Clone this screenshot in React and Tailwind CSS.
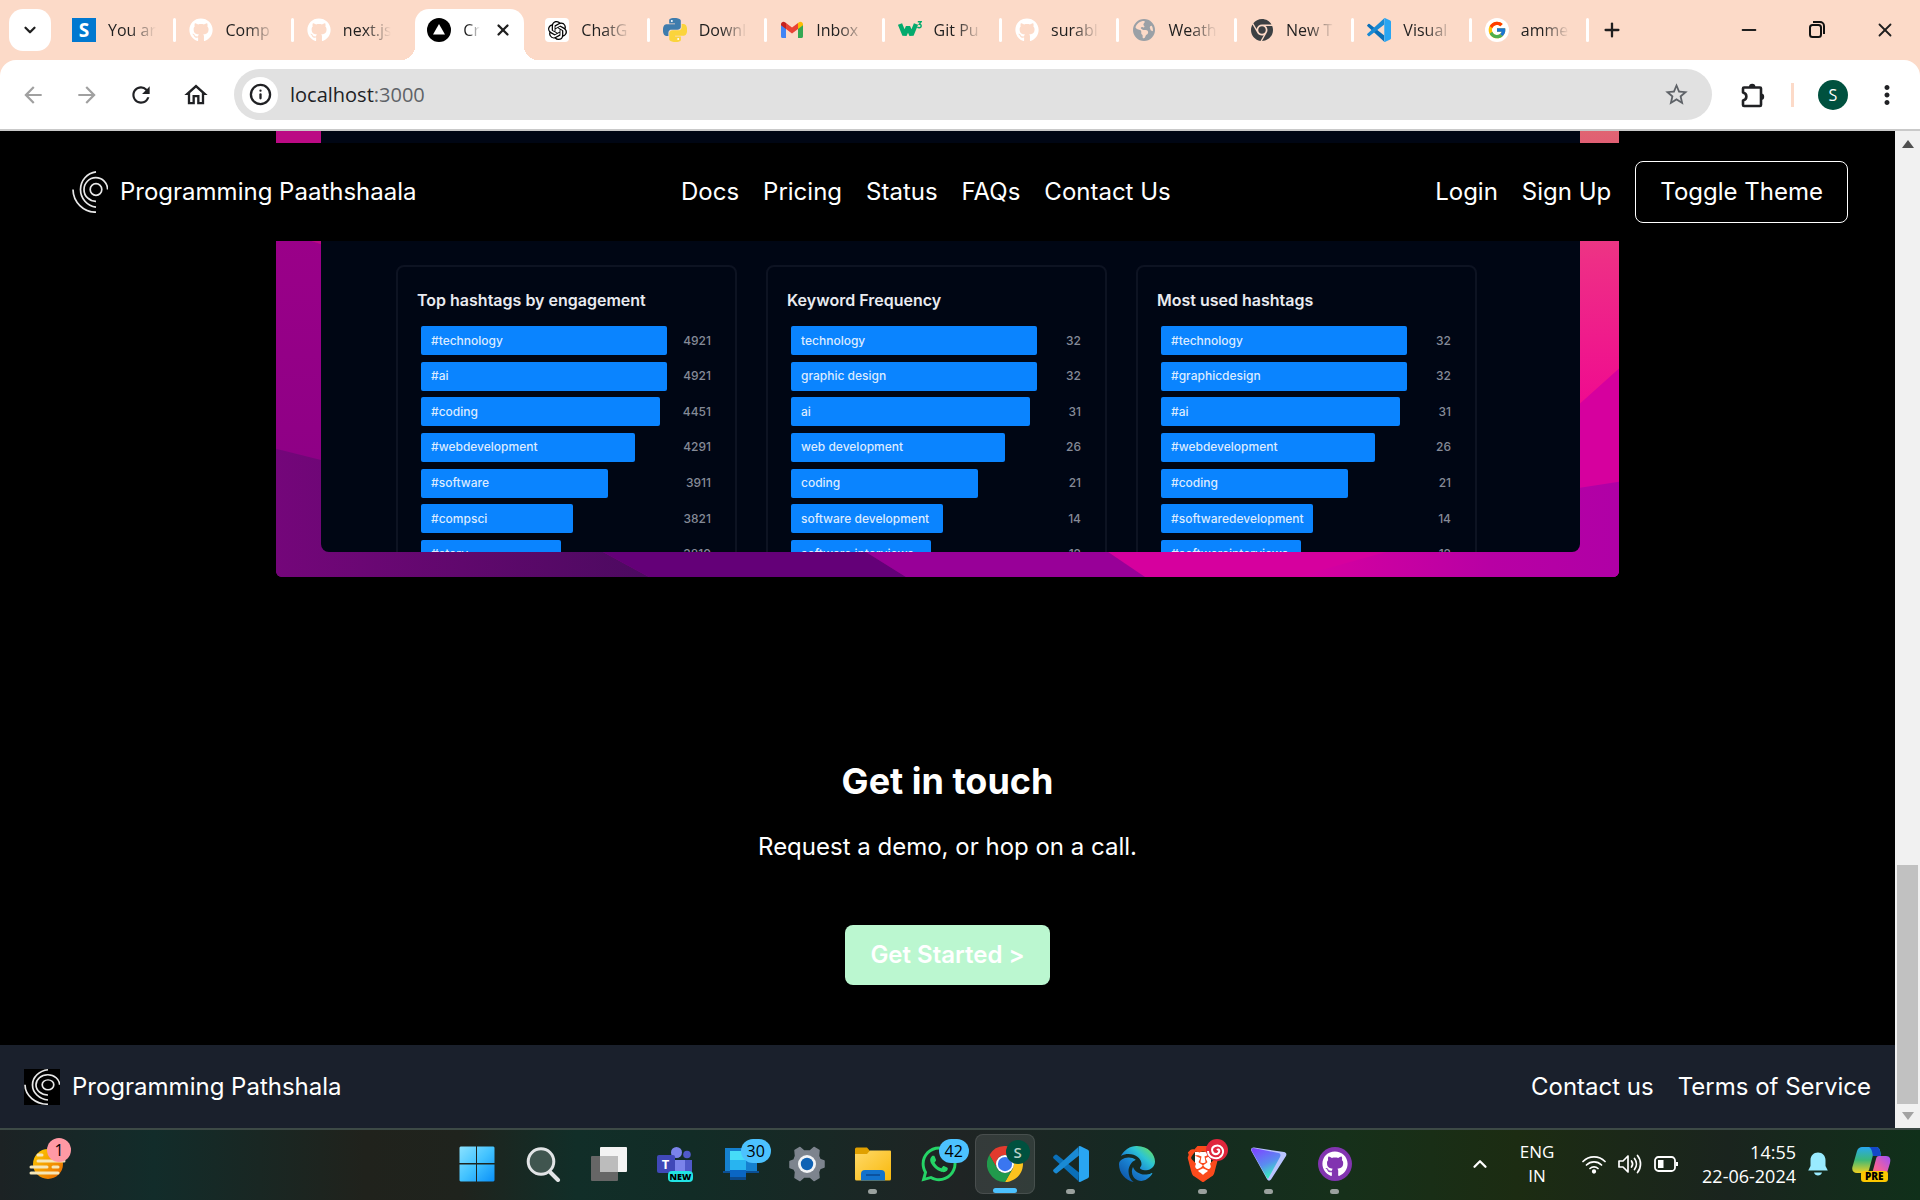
import React from "react";
import { FaGithub, FaChrome, FaEarthAmericas, FaEdge, FaWhatsapp } from "react-icons/fa6";
import { SiBrave, SiOpenai } from "react-icons/si";
import { FcGoogle } from "react-icons/fc";
import {
  MdArrowBack,
  MdArrowForward,
  MdRefresh,
  MdOutlineHome,
  MdStarBorder,
  MdMoreVert,
} from "react-icons/md";
import { ChevronDown, ChevronUp, X, Plus, Minus, Info } from "lucide-react";

/* ---------- brand drawings ---------- */

function Logo({ className }) {
  return (
    <svg viewBox="0 0 36 42" preserveAspectRatio="none" className={className} fill="none" stroke="#e8e8e8" strokeWidth="1.7" aria-hidden="true">
      <circle cx="24" cy="18.5" r="5.8" />
      <path d="M35.6 18.5A11.8 11.8 0 1 0 24 30.3" />
      <path d="M24 0.9A17.8 17.8 0 0 0 24 36.2" />
      <path d="M1 18.5A23 23 0 0 0 24 41.2" />
    </svg>
  );
}

function PythonIcon() {
  return (
    <svg viewBox="0 0 24 24" className="size-6" aria-hidden="true">
      <path
        fill="#3f7cad"
        d="M14.25.18l.9.2.73.26.59.3.45.32.34.34.25.34.16.33.1.3.04.26.02.2-.01.13V8.5l-.05.63-.13.55-.21.46-.26.38-.3.31-.33.25-.35.19-.35.14-.33.1-.3.07-.26.04-.21.02H8.77l-.69.05-.59.14-.5.22-.41.27-.33.32-.27.35-.2.36-.15.37-.1.35-.07.32-.04.27-.02.21v3.06H3.17l-.21-.03-.28-.07-.32-.12-.35-.18-.36-.26-.36-.36-.35-.46-.32-.59-.28-.73-.21-.88-.14-1.05-.05-1.23.06-1.22.16-1.04.24-.87.32-.71.36-.57.4-.44.42-.33.42-.24.4-.16.36-.1.32-.05.24-.01h.16l.06.01h8.16v-.83H6.18l-.01-2.75-.02-.37.05-.34.11-.31.17-.28.25-.26.31-.23.38-.2.44-.18.51-.15.58-.12.64-.1.71-.06.77-.04.84-.02 1.27.05z"
      />
      <path
        fill="#fbd43c"
        d="M21.1 6.11l.28.06.32.12.35.18.36.27.36.35.35.47.32.59.28.73.21.88.14 1.04.05 1.23-.06 1.23-.16 1.04-.24.86-.32.71-.36.57-.4.45-.42.33-.42.24-.4.16-.36.09-.32.05-.24.02-.16-.01h-8.22v.82h5.84l.01 2.76.02.36-.05.34-.11.31-.17.29-.25.25-.31.24-.38.2-.44.17-.51.15-.58.13-.64.09-.71.07-.77.04-.84.01-1.27-.04-1.07-.14-.9-.2-.73-.25-.59-.3-.45-.33-.34-.34-.25-.34-.16-.33-.1-.3-.04-.25-.02-.2.01-.13v-5.34l.05-.64.13-.54.21-.46.26-.38.3-.32.33-.24.35-.2.35-.14.33-.1.3-.06.26-.04.21-.02.13-.01h5.84l.69-.05.59-.14.5-.21.41-.28.33-.32.27-.35.2-.36.15-.36.1-.35.07-.32.04-.28.02-.21V6.07h2.09l.14.01z"
      />
      <circle cx="8.8" cy="2.9" r="1" fill="#fff" />
      <circle cx="15.2" cy="21" r="1" fill="#fff" />
    </svg>
  );
}

function GmailIcon() {
  return (
    <svg viewBox="0 0 24 24" className="size-6" aria-hidden="true">
      <path fill="#4285f4" d="M1 6v12.500a1.600 1.600 0 0 0 1.600 1.500H6V10z" />
      <path fill="#34a853" d="M18 20h3.400a1.600 1.600 0 0 0 1.600-1.500V6l-5 4z" />
      <path fill="#ea4335" d="M6 11V5l6 4.500L18 5v6l-6 4.500z" />
      <path fill="#c5221f" d="M1 6.200C1 4 3.500 3 5 4.200L6 5v6L1 7.300z" />
      <path fill="#fbbc04" d="M23 6.200C23 4 20.500 3 19 4.200L18 5v6l5-3.700z" />
    </svg>
  );
}

function W3Icon() {
  return (
    <svg viewBox="0 0 24 24" className="size-6" aria-hidden="true">
      <path d="M2 6l4.500 11L10 9l3.500 8L18 6" fill="none" stroke="#04aa6d" strokeWidth="4.500" strokeLinejoin="bevel" />
      <path d="M19.800 3.700h3.400l-1.800 2.500c2.400 0 2.400 3.600-.2 3.600-.8 0-1.400-.3-1.700-.9" fill="none" stroke="#04aa6d" strokeWidth="1.400" />
    </svg>
  );
}

function VsCodeIcon({ className }) {
  return (
    <svg viewBox="0 0 24 24" className={className} aria-hidden="true">
      <path fill="#0a6fb8" d="M17.300 17.600L2.600 5.900a1 1 0 0 0-1.300.1L.4 6.900a1 1 0 0 0 0 1.400L17 23.500z" />
      <path fill="#1a8ad4" d="M17.300 6.400L2.600 18.100a1 1 0 0 1-1.300-.1L.4 17.100a1 1 0 0 1 0-1.400L17 .5z" />
      <path fill="#29a5f2" d="M17 .3a1.400 1.400 0 0 1 1.400-.1l4.800 2.300a1.400 1.400 0 0 1 .8 1.300v16.400a1.400 1.400 0 0 1-.8 1.300l-4.800 2.300a1.400 1.400 0 0 1-1.400-.1c.3-.2.300-.5.300-.9V1.200c0-.4 0-.7-.3-.9z" />
    </svg>
  );
}

function ChromeIcon({ className }) {
  return (
    <svg viewBox="0 0 48 48" className={className} aria-hidden="true">
      <path fill="#e33b2e" d="M24 12H44.780A24 24 0 0 0 3.200 12L13.600 30A12 12 0 0 1 24 12z" />
      <path fill="#fcc31e" d="M34.390 30L24 48A24 24 0 0 0 44.780 12H24A12 12 0 0 1 34.390 30z" />
      <path fill="#219a4c" d="M13.600 30L3.200 12A24 24 0 0 0 24 48L34.390 30A12 12 0 0 1 13.600 30z" />
      <circle cx="24" cy="24" r="12" fill="#fff" />
      <circle cx="24" cy="24" r="9.500" fill="#3a76f0" />
    </svg>
  );
}

function PuzzleIcon() {
  return (
    <svg viewBox="0 0 28 28" className="size-7" aria-hidden="true">
      <path
        d="M5 6.500h16a1 1 0 0 1 1 1V24a1 1 0 0 1-1 1H5a1 1 0 0 1-1-1v-4.500c4.500-1 4.500-7 0-8V7.500a1 1 0 0 1 1-1z"
        fill="none"
        stroke="#202124"
        strokeWidth="2.600"
        strokeLinejoin="round"
      />
      <path d="M10 6a3.200 3.200 0 0 1 6.400 0zM22 12.500a3.200 3.200 0 0 1 0 6.400z" fill="#202124" />
    </svg>
  );
}

/* ---------- browser chrome ---------- */

const tabs = [
  { title: "You ar", icon: <span className="flex size-6 items-center justify-center bg-[#0078d0] text-[19px] font-bold leading-none text-white">S</span> },
  { title: "Comp", icon: <FaGithub className="size-6 text-white" /> },
  { title: "next.js", icon: <FaGithub className="size-6 text-white" />, last: true },
  {
    title: "Cr",
    active: true,
    icon: (
      <svg viewBox="0 0 24 24" className="size-6 shrink-0" aria-hidden="true">
        <circle cx="12" cy="12" r="12" />
        <path d="M12 6l6 10.500H6z" fill="#fff" />
      </svg>
    ),
  },
  { title: "ChatG", icon: <span className="flex size-6 items-center justify-center rounded bg-white"><SiOpenai className="size-[19px] text-black" /></span> },
  { title: "Downl", icon: <PythonIcon /> },
  { title: "Inbox", icon: <GmailIcon /> },
  { title: "Git Pu", icon: <W3Icon /> },
  { title: "surabl", icon: <FaGithub className="size-6 text-white" /> },
  { title: "Weath", icon: <FaEarthAmericas className="size-[22px] text-[#9aa0a6]" /> },
  { title: "New T", icon: <FaChrome className="size-[22px] text-[#3c4043]" /> },
  { title: "Visual", icon: <VsCodeIcon className="size-6" /> },
  { title: "amme", icon: <span className="flex size-6 items-center justify-center rounded-full bg-white"><FcGoogle className="size-5" /></span> },
];

function Tab({ title, icon, active, last }) {
  if (active) {
    return (
      <button type="button" className="relative ml-1 mr-2 flex h-[51px] items-center self-end rounded-t-[14px] bg-white pb-[9px] pl-3 pr-3">
        <span className="absolute bottom-0 right-full size-[14px] bg-[radial-gradient(circle_at_0_0,#fcdac8_14px,#ffffff_14px)]" />
        <span className="absolute bottom-0 left-full size-[14px] bg-[radial-gradient(circle_at_100%_0,#fcdac8_14px,#ffffff_14px)]" />
        {icon}
        <span className="ml-3 w-[17px] whitespace-nowrap text-left text-base leading-6 [mask-image:linear-gradient(to_right,#000_30%,transparent)]">{title}</span>
        <X className="ml-auto size-[18px]" strokeWidth={3} />
      </button>
    );
  }
  return (
    <button type="button" className="flex min-w-0 items-center pl-[13px]">
      <span className="flex w-6 shrink-0 justify-center">{icon}</span>
      <span className="ml-3 min-w-0 flex-1 whitespace-nowrap text-left text-base leading-6 [mask-image:linear-gradient(to_right,#000_45%,transparent)]">{title}</span>
      <span className={last ? "ml-[17px] h-6 w-[3px]" : "ml-[17px] h-6 w-[3px] rounded bg-white"} />
    </button>
  );
}

function TabStrip() {
  return (
    <div className="flex h-[60px] items-center text-[#1f1f1f]">
      <button type="button" aria-label="Search tabs" className="ml-[9px] flex size-[42px] shrink-0 items-center justify-center rounded-[14px] bg-white">
        <ChevronDown className="size-[18px]" strokeWidth={3} />
      </button>
      <div className="ml-2 grid h-full w-[79.7%] shrink-0 grid-cols-[repeat(3,minmax(0,1fr))_121px_repeat(9,minmax(0,1fr))] items-center">
        {tabs.map((t) => (
          <Tab key={t.title} {...t} />
        ))}
      </div>
      <button type="button" aria-label="New tab" className="ml-3">
        <Plus className="size-[22px]" strokeWidth={2.500} />
      </button>
      <div className="ml-auto flex items-center gap-[46px] pr-6">
        <button type="button" aria-label="Minimize"><Minus className="size-[22px]" /></button>
        <button type="button" aria-label="Restore">
          <svg viewBox="0 0 22 22" className="size-[22px]" fill="none" stroke="#111" strokeWidth="2" aria-hidden="true">
            <rect x="4" y="6" width="11" height="12" rx="2.500" />
            <path d="M7 3h7a4 4 0 0 1 4 4v8" />
          </svg>
        </button>
        <button type="button" aria-label="Close"><X className="size-[22px]" /></button>
      </div>
    </div>
  );
}

function Toolbar() {
  return (
    <div className="flex h-[71px] items-center rounded-t-2xl border-b-2 border-[#c9c9c9] bg-white pl-5 pr-[18px] text-[#202124]">
      <div className="flex items-center gap-7">
        <button type="button" aria-label="Back" className="text-[#a0a0a0]"><MdArrowBack className="size-[26px]" /></button>
        <button type="button" aria-label="Forward" className="text-[#a0a0a0]"><MdArrowForward className="size-[26px]" /></button>
        <button type="button" aria-label="Reload"><MdRefresh className="size-[26px]" /></button>
        <button type="button" aria-label="Home"><MdOutlineHome className="size-7" /></button>
      </div>
      <div className="ml-6 flex h-[51px] min-w-0 flex-1 items-center rounded-full bg-[#e1e1e1] pl-2 pr-[22px]">
        <span className="flex size-9 shrink-0 items-center justify-center rounded-full bg-white"><Info className="size-[23px]" strokeWidth={2.400} /></span>
        <div className="ml-3 flex-1 text-xl" role="textbox" aria-label="Address">
          localhost<span className="text-[#5f6368]">:3000</span>
        </div>
        <button type="button" aria-label="Bookmark" className="text-[#5f6368]"><MdStarBorder className="size-[27px]" /></button>
      </div>
      <button type="button" aria-label="Extensions" className="ml-[27px]"><PuzzleIcon /></button>
      <span className="ml-6 h-6 w-[3px] bg-[#fcdac8]" />
      <button type="button" aria-label="Profile" className="ml-6 size-[30px] rounded-full bg-[#00513f] text-base text-white">S</button>
      <button type="button" aria-label="Menu" className="ml-6"><MdMoreVert className="size-[30px]" /></button>
    </div>
  );
}

/* ---------- web page ---------- */

function Header() {
  return (
    <header className="absolute inset-x-0 top-3 z-10 flex h-[98px] items-center justify-between bg-black pl-[72px] pr-[47px]">
      <a href="#home" className="flex items-center gap-3">
        <Logo className="h-[42px] w-9" />
        Programming Paathshaala
      </a>
      <nav className="flex gap-6">
        <a href="#docs">Docs</a>
        <a href="#pricing">Pricing</a>
        <a href="#status">Status</a>
        <a href="#faqs">FAQs</a>
        <a href="#contact">Contact Us</a>
      </nav>
      <div className="flex items-center gap-6">
        <a href="#login">Login</a>
        <a href="#signup">Sign Up</a>
        <button type="button" className="h-[62px] rounded-lg border border-white px-6">Toggle Theme</button>
      </div>
    </header>
  );
}

const cards = [
  {
    title: "Top hashtags by engagement",
    rows: [["#technology", 4921, 246], ["#ai", 4921, 246], ["#coding", 4451, 239], ["#webdevelopment", 4291, 214], ["#software", 3911, 187], ["#compsci", 3821, 152], ["#story", 3810, 140]],
  },
  {
    title: "Keyword Frequency",
    rows: [["technology", 32, 246], ["graphic design", 32, 246], ["ai", 31, 239], ["web development", 26, 214], ["coding", 21, 187], ["software development", 14, 152], ["software interviews", 12, 140]],
  },
  {
    title: "Most used hashtags",
    rows: [["#technology", 32, 246], ["#graphicdesign", 32, 246], ["#ai", 31, 239], ["#webdevelopment", 26, 214], ["#coding", 21, 187], ["#softwaredevelopment", 14, 152], ["#softwareinterviews", 12, 140]],
  },
];

function ChartCard({ title, rows }) {
  return (
    <section className="rounded-lg border-2 border-[#0d1322] pl-[19px] pr-6 pt-[21px]">
      <h3 className="text-base font-semibold leading-6 text-[#e9ebf0]">{title}</h3>
      <ul className="ml-1 mt-[14px] flex h-[243px] flex-col justify-between text-xs font-medium">
        {rows.map(([label, value, width]) => (
          <li key={label} className="flex h-[29px] items-center justify-between">
            <span className="flex h-full items-center whitespace-nowrap rounded-xs bg-[#0a84ff] pl-[10px] text-[#dcebff]" style={{ width: (width / 290) * 100 + "%" }}>
              {label}
            </span>
            <span className="text-[#858a97]">{value}</span>
          </li>
        ))}
      </ul>
    </section>
  );
}

function Wallpaper() {
  return (
    <svg viewBox="0 0 1343 445" preserveAspectRatio="none" className="absolute inset-0 -z-10 h-full w-full" aria-hidden="true">
      <defs>
        <linearGradient id="wl" x1="0" y1="0" x2="0" y2="1">
          <stop offset="0" stopColor="#a0008a" />
          <stop offset="1" stopColor="#880084" />
        </linearGradient>
        <linearGradient id="wb" x1="0" y1="0" x2="1" y2="0">
          <stop offset="0" stopColor="#74067a" />
          <stop offset="1" stopColor="#4c0a60" />
        </linearGradient>
        <linearGradient id="wr" x1="0" y1="0" x2="0" y2="1">
          <stop offset="0" stopColor="#e06472" />
          <stop offset="0.45" stopColor="#ee2e86" />
          <stop offset="1" stopColor="#f00890" />
        </linearGradient>
        <linearGradient id="wp" x1="0" y1="0" x2="1" y2="0">
          <stop offset="0" stopColor="#d800a0" />
          <stop offset="0.6" stopColor="#b800a4" />
          <stop offset="1" stopColor="#b000a6" />
        </linearGradient>
      </defs>
      <rect width="1343" height="445" fill="url(#wl)" />
      <path d="M0 0H60V118L30 108L0 90z" fill="#bb0a84" />
      <path d="M0 317L60 332L327 420L373 445H0z" fill="url(#wb)" />
      <path d="M327 420L373 445H630L590 420z" fill="#640078" />
      <path d="M590 420L630 445H870L832 420z" fill="#980098" />
      <path d="M832 420L869 445H1343V200H1000z" fill="#d6009e" />
      <path d="M1020 445L1110 420L1304 356L1343 350V445z" fill="url(#wp)" />
      <path d="M1290 0H1343V237L1304 272L1290 285z" fill="url(#wr)" />
    </svg>
  );
}

function Showcase() {
  return (
    <figure className="relative isolate mx-auto w-full max-w-[1343px] overflow-hidden rounded-b-md pb-[25px] pl-[45px] pr-[39px]">
      <Wallpaper />
      <div className="h-[421px] overflow-hidden rounded-b-lg bg-[#000614] pl-[75px] pr-[103px] pt-[134px]">
        <div className="grid h-[330px] grid-cols-3 gap-[29px]">
          {cards.map((c) => (
            <ChartCard key={c.title} {...c} />
          ))}
        </div>
      </div>
    </figure>
  );
}

function PageFooter() {
  return (
    <footer className="flex h-[83px] items-center justify-between bg-[#1a202c] px-6">
      <a href="#home" className="flex items-center gap-3">
        <Logo className="size-9 bg-black" />
        Programming Pathshala
      </a>
      <div className="flex gap-6">
        <a href="#contact">Contact us</a>
        <a href="#terms">Terms of Service</a>
      </div>
    </footer>
  );
}

function Page() {
  return (
    <div className="relative flex min-w-0 flex-1 flex-col justify-between bg-black font-['Inter',sans-serif] text-2xl leading-9 text-white">
      <Header />
      <main>
        <Showcase />
        <section className="mt-[180px] flex flex-col items-center">
          <h2 className="text-4xl font-bold leading-[48px]">Get in touch</h2>
          <p className="mt-6">Request a demo, or hop on a call.</p>
          <button type="button" className="mt-[60px] h-[60px] rounded-lg bg-[#bbf7d0] px-[25px] font-semibold">Get Started &gt;</button>
        </section>
      </main>
      <PageFooter />
    </div>
  );
}

function Scrollbar() {
  return (
    <div className="flex w-[25px] flex-col items-center bg-[#f1f1f1]" aria-hidden="true">
      <svg viewBox="0 0 12 8" className="mt-[9px] h-2 w-3"><path d="M6 0l6 8H0z" fill="#505050" /></svg>
      <span className="mt-auto h-[239px] w-[21px] bg-[#c1c1c1]" />
      <svg viewBox="0 0 12 8" className="mb-2 mt-2 h-2 w-3"><path d="M0 0h12L6 8z" fill="#a3a3a3" /></svg>
    </div>
  );
}

/* ---------- taskbar ---------- */

function WindowsIcon() {
  return (
    <svg viewBox="0 0 36 36" className="size-9" aria-hidden="true">
      <defs>
        <linearGradient id="win" x1="0" y1="0" x2="1" y2="1">
          <stop offset="0" stopColor="#8be2ff" />
          <stop offset="0.5" stopColor="#43c3ff" />
          <stop offset="1" stopColor="#0a90f8" />
        </linearGradient>
      </defs>
      <path fill="url(#win)" d="M1.500.5H17V17H.5V1.500zM18 .5h16.500l1 1V17H18zM.5 18.500H17v17H1.500l-1-1zM18 18.500h17.500v16l-1 1H18z" />
    </svg>
  );
}

function SearchIcon() {
  return (
    <svg viewBox="0 0 36 36" className="size-9" fill="none" stroke="#e2e4e6" aria-hidden="true">
      <circle cx="16" cy="15.500" r="12.800" strokeWidth="3" fill="#40554f" />
      <path d="M25.500 26.500L33 34" strokeWidth="4" strokeLinecap="round" />
    </svg>
  );
}

function TaskViewIcon() {
  return (
    <svg viewBox="0 0 36 36" className="size-9" aria-hidden="true">
      <rect x="9" y="1" width="27" height="25" rx="1" fill="#f3f3f3" />
      <rect x="0" y="10" width="27" height="25" rx="1" fill="#666" />
      <path d="M9 10h18v16H9z" fill="#bcbcbc" />
    </svg>
  );
}

function TeamsIcon() {
  return (
    <span className="relative block size-9">
      <svg viewBox="0 0 36 36" className="size-9" aria-hidden="true">
        <circle cx="19.500" cy="6.500" r="5.500" fill="#7b83eb" />
        <circle cx="30" cy="8.500" r="3.800" fill="#5059c9" />
        <path d="M26 14h9v12a7 7 0 0 1-9 3z" fill="#5059c9" />
        <path d="M14 14h14v14a7 7 0 0 1-14 2z" fill="#7b83eb" />
        <rect x="0" y="9" width="18" height="18" rx="2" fill="#4048b8" />
      </svg>
      <span className="absolute left-0 top-[9px] w-[18px] text-center text-[13px] font-bold leading-[18px] text-white">T</span>
      <span className="absolute left-[11px] top-[25px] rounded bg-[#22e4e4] px-[2px] text-[9px] font-extrabold leading-[11px] text-black">NEW</span>
    </span>
  );
}

function PhoneLinkIcon() {
  return (
    <svg viewBox="0 0 36 36" className="size-9" aria-hidden="true">
      <path d="M2 2h32v23h2v2H0v-2h2z" fill="#1580cf" />
      <path d="M0 25h36v2H0z" fill="#0b4f94" />
      <path d="M7 5h16v29H7z" fill="#0a66c4" />
      <path d="M7 5h16v19H7z" fill="#28b4f0" />
      <path d="M7 5h16v9H7z" fill="#46dcf8" />
      <path d="M7 31h16v3H7z" fill="#0b4a8c" />
    </svg>
  );
}

function SettingsIcon() {
  return (
    <svg viewBox="0 0 36 36" className="size-9" aria-hidden="true">
      <path
        fill="#7d848e"
        stroke="#7d848e"
        strokeWidth="1.500"
        strokeLinejoin="round"
        d="M11 1.500l4 3.500h6l4-3.500 5 3-.5 5.500 1.500 3.500 4 1.500v6l-4 1.500-1.500 3.500.5 5.500-5 3-4-3.500h-6l-4 3.500-5-3 .5-5.500L5 23l-4-1.500v-6L5 14l1.500-4L6 4.500z"
      />
      <circle cx="18" cy="18" r="9" fill="#f2f4f6" />
      <circle cx="18" cy="18" r="6.200" fill="#0f62b4" />
    </svg>
  );
}

function FolderIcon() {
  return (
    <svg viewBox="0 0 36 36" className="size-9" aria-hidden="true">
      <defs>
        <linearGradient id="fold" x1="0" y1="0" x2="1" y2="1">
          <stop offset="0" stopColor="#ffd968" />
          <stop offset="1" stopColor="#f9b90c" />
        </linearGradient>
      </defs>
      <path d="M0 3a1.500 1.500 0 0 1 1.500-1.500H12L15 5v6H0z" fill="#e0a000" />
      <path d="M0 8h12l3-3.500h20a1 1 0 0 1 1 1V33a1.500 1.500 0 0 1-1.500 1.500h-33A1.500 1.500 0 0 1 0 33z" fill="url(#fold)" />
      <path d="M6 34.500V28a4 4 0 0 1 4-4h16a4 4 0 0 1 4 4v6.500z" fill="#1272cc" />
      <path d="M11 29h14" stroke="#0a4a94" strokeWidth="1.600" />
    </svg>
  );
}

function EdgeIcon() {
  return (
    <span className="relative block size-9">
      <svg viewBox="0 0 36 36" className="absolute inset-0 size-9" aria-hidden="true">
        <defs>
          <linearGradient id="edge" x1="1" y1="0.1" x2="0.2" y2="1">
            <stop offset="0" stopColor="#6be05a" />
            <stop offset="0.3" stopColor="#2cc4d4" />
            <stop offset="0.6" stopColor="#1a84d4" />
            <stop offset="1" stopColor="#0e56a8" />
          </linearGradient>
        </defs>
      </svg>
      <FaEdge className="absolute inset-0 size-9" style={{ fill: "url(#edge)" }} />
    </span>
  );
}

function BraveIcon() {
  return (
    <span className="relative block size-9">
      <svg viewBox="0 0 36 36" className="absolute inset-0 size-9" aria-hidden="true">
        <path d="M10 6h16v22l-8 6-8-6z" fill="#fff" />
      </svg>
      <SiBrave className="absolute inset-0 size-9 text-[#fb4a1c]" />
      <svg viewBox="0 0 24 24" className="absolute -right-2 -top-2 size-6" aria-hidden="true">
        <circle cx="12" cy="12" r="11" fill="#e0263c" />
        <path d="M12 12c2-2 4 2 0 4-5 1-7-6-2-8 6-2 10 4 7 9-4 6-14 3-14-4" fill="none" stroke="#fff" strokeWidth="2" />
      </svg>
    </span>
  );
}

function VpnIcon() {
  return (
    <svg viewBox="0 0 36 36" className="size-9" aria-hidden="true">
      <defs>
        <linearGradient id="vpn" x1="0.1" y1="0.1" x2="0.5" y2="1">
          <stop offset="0" stopColor="#7a4cff" />
          <stop offset="0.55" stopColor="#5a8cf0" />
          <stop offset="1" stopColor="#38f0c0" />
        </linearGradient>
      </defs>
      <path d="M3 1.500l30 4.500c2 .4 3 2 2 4L20 33.500c-1 1.500-3 1.500-3.800 0L.4 5c-1-2 .4-3.800 2.600-3.500z" fill="#b9c4ff" />
      <path d="M2.500 2l25 5c2 .5 2.500 2 1.500 4L17.500 32c-.5 1-1 1-1.500 0L.8 5C0 3.500.8 1.800 2.500 2z" fill="url(#vpn)" />
    </svg>
  );
}

const apps = [
  { name: "Start", icon: <WindowsIcon /> },
  { name: "Search", icon: <SearchIcon /> },
  { name: "Task view", icon: <TaskViewIcon /> },
  { name: "Teams", icon: <TeamsIcon /> },
  { name: "Phone Link", icon: <PhoneLinkIcon />, badge: "30" },
  { name: "Settings", icon: <SettingsIcon /> },
  { name: "File Explorer", icon: <FolderIcon />, open: true },
  { name: "WhatsApp", icon: <FaWhatsapp className="size-10 text-[#25d366]" />, badge: "42" },
  { name: "Chrome", icon: <ChromeIcon className="size-9" />, active: true },
  { name: "Visual Studio Code", icon: <VsCodeIcon className="size-9" />, open: true },
  { name: "Edge", icon: <EdgeIcon /> },
  { name: "Brave", icon: <BraveIcon />, open: true },
  { name: "VPN", icon: <VpnIcon />, open: true },
  {
    name: "GitHub Desktop",
    icon: <span className="flex size-[34px] items-center justify-center rounded-full bg-[#8234b0]"><FaGithub className="size-[26px] text-white" /></span>,
    open: true,
  },
];

function TaskbarApp({ name, icon, badge, open, active }) {
  return (
    <button type="button" aria-label={name} className="flex w-[66px] justify-center">
      <span
        className={
          active
            ? "relative flex h-[60px] w-[60px] items-center justify-center rounded-lg border border-white/10 bg-white/10"
            : "relative flex h-[60px] w-[60px] items-center justify-center"
        }
      >
        {icon}
        {badge && <span className="absolute left-[30px] top-[5px] rounded-full bg-[#4cc2ff] px-[6px] text-base leading-6 text-black">{badge}</span>}
        {active && <span className="absolute left-[30px] top-[5px] size-6 rounded-full bg-[#00513f] text-[15px] font-semibold leading-6 text-[#b8d0c8]">S</span>}
        {open && <span className="absolute bottom-0 h-[5px] w-[9px] rounded-full bg-[#9aa19e]" />}
        {active && <span className="absolute bottom-0 h-[5px] w-6 rounded-full bg-[#4cc2ff]" />}
      </span>
    </button>
  );
}

function WidgetsButton() {
  return (
    <button type="button" aria-label="Weather" className="relative ml-7 size-[42px]">
      <svg viewBox="0 -2 42 42" className="size-[42px]" aria-hidden="true">
        <defs>
          <linearGradient id="sun" x1="0" y1="0" x2="1" y2="1">
            <stop offset="0" stopColor="#ffd000" />
            <stop offset="1" stopColor="#e86400" />
          </linearGradient>
        </defs>
        <circle cx="20" cy="19" r="15" fill="url(#sun)" />
        <g stroke="#f6e6b8" strokeWidth="3" strokeLinecap="round">
          <path d="M10 10h4M10 16h26M3 22h16M25 22h5M3 28h27" />
        </g>
      </svg>
      <span className="absolute -top-[5px] left-[19px] size-6 rounded-full bg-[#ff99a4] text-base leading-6 text-black">1</span>
    </button>
  );
}

function CopilotIcon() {
  return (
    <span className="relative block h-9 w-10">
      <svg viewBox="0 0 40 36" className="h-9 w-10" aria-hidden="true">
        <defs>
          <linearGradient id="cpa" x1="0" y1="0" x2="0" y2="1">
            <stop offset="0" stopColor="#28a8f0" />
            <stop offset="0.5" stopColor="#3cb878" />
            <stop offset="1" stopColor="#f0d020" />
          </linearGradient>
          <linearGradient id="cpb" x1="1" y1="0" x2="0" y2="1">
            <stop offset="0" stopColor="#a050f8" />
            <stop offset="0.5" stopColor="#f060a0" />
            <stop offset="1" stopColor="#ff8050" />
          </linearGradient>
        </defs>
        <path d="M10 1h14c3 0 4 2 5 8h-8l-4 15c-1 2-2 3-4 3H5c-4 0-6-3-4-8L5 5c1-3 3-4 5-4z" fill="url(#cpa)" />
        <path d="M17 1h7c3 0 4 2 5 9h-8c-1-6-2-8-4-9z" fill="#1448c8" />
        <path d="M27 10h7c4 0 5 3 4 7l-3 10c-1 4-3 6-6 6H14c3 0 5-2 6-5l4-15c.5-2 1-3 3-3z" fill="url(#cpb)" />
      </svg>
      <span className="absolute left-[9px] top-[25px] rounded-[3px] bg-[#fcc800] px-1 text-[10px] font-extrabold leading-[11px] text-black">PRE</span>
    </span>
  );
}

function Tray() {
  return (
    <div className="ml-auto flex items-center pr-7 leading-6 text-white">
      <button type="button" aria-label="Hidden icons"><ChevronUp className="size-[22px]" strokeWidth={2.500} /></button>
      <button type="button" className="ml-[26px] w-10 text-center text-[17px] leading-6">ENG<br />IN</button>
      <button type="button" aria-label="Network, volume and battery" className="ml-[25px] flex items-center gap-3">
        <svg viewBox="0 0 24 20" className="h-5 w-6" fill="none" stroke="#fff" strokeWidth="1.700" strokeLinecap="round" aria-hidden="true">
          <path d="M1 7.500a15.500 15.500 0 0 1 22 0M4.500 11a10.500 10.500 0 0 1 15 0M8 14.500a5.700 5.700 0 0 1 8 0" />
          <circle cx="12" cy="17.500" r="1.300" fill="#fff" />
        </svg>
        <svg viewBox="0 0 24 20" className="h-5 w-6" fill="none" stroke="#fff" strokeWidth="1.700" strokeLinejoin="round" strokeLinecap="round" aria-hidden="true">
          <path d="M1 7h4l5-5v16l-5-5H1zM13.500 7a5 5 0 0 1 0 6M16.500 4.500a9 9 0 0 1 0 11M19.500 1.500a13.500 13.500 0 0 1 0 17" />
        </svg>
        <svg viewBox="0 0 24 18" className="h-[18px] w-6" fill="none" stroke="#fff" strokeWidth="1.800" aria-hidden="true">
          <rect x="1" y="2" width="20" height="14" rx="3.500" />
          <rect x="4" y="5" width="5.500" height="8" fill="#fff" stroke="none" />
          <path d="M23 7v4" strokeWidth="2" />
        </svg>
      </button>
      <button type="button" className="ml-6 text-right text-lg leading-6">14:55<br />22-06-2024</button>
      <button type="button" aria-label="Notifications" className="ml-3">
        <svg viewBox="0 0 20 24" className="h-6 w-5" fill="#99ebff" aria-hidden="true">
          <path d="M10 .5c4.500 0 7.500 3.500 7.500 7.500v6l2.300 4.500H.2L2.500 14V8c0-4 3-7.500 7.500-7.500zM6 20.500h8c-.8 4-7.200 4-8 0z" />
        </svg>
      </button>
      <button type="button" aria-label="Copilot" className="ml-6"><CopilotIcon /></button>
    </div>
  );
}

function Taskbar() {
  return (
    <div className="flex h-[72px] items-center border-t-2 border-[#3d4a46] bg-[linear-gradient(to_right,#1c2224,#122c2a_8%,#20221c_19%,#1f231d_24%,#112e28_30%,#122c26_36%,#1f2424_50%,#142a22_60%,#16301a_70%,#1c2c12_79%,#1a241e_90%,#10301a)] pb-[2px]">
      <div className="flex w-[23.1%]"><WidgetsButton /></div>
      <nav aria-label="Taskbar" className="flex">
        {apps.map((a) => (
          <TaskbarApp key={a.name} {...a} />
        ))}
      </nav>
      <Tray />
    </div>
  );
}

export default function App() {
  return (
    <div className="flex min-h-screen flex-col bg-[#fcdac8] font-['Open_Sans','Noto_Sans',sans-serif]">
      <TabStrip />
      <Toolbar />
      <div className="flex flex-1">
        <Page />
        <Scrollbar />
      </div>
      <Taskbar />
    </div>
  );
}
